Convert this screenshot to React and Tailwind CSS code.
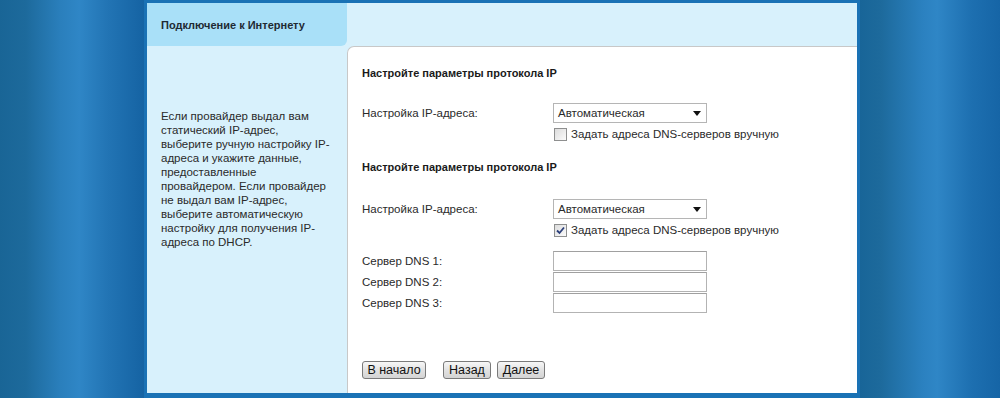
import React from "react";

const helpLines = [
  "Если провайдер выдал вам",
  "статический IP-адрес,",
  "выберите ручную настройку IP-",
  "адреса и укажите данные,",
  "предоставленные",
  "провайдером. Если провайдер",
  "не выдал вам IP-адрес,",
  "выберите автоматическую",
  "настройку для получения IP-",
  "адреса по DHCP.",
];

const Select = ({ value }) => (
  <div className="w-[154px] h-[20px] border border-[#b5b5b5] bg-white flex items-center justify-between pl-[4px] pr-[5px]">
    <span>{value}</span>
    <svg width="8" height="5" viewBox="0 0 8 5">
      <path d="M0 0H8L4 5Z" fill="#111" />
    </svg>
  </div>
);

const Checkbox = ({ checked, label }) => (
  <div className="flex items-center h-[14px] pl-[1px]">
    <span className="w-[13px] h-[13px] border border-[#8e8f8f] bg-[linear-gradient(135deg,#dcdcdc,#fbfbfb)] flex items-center justify-center">
      {checked && (
        <svg width="9" height="9" viewBox="0 0 9 9">
          <path d="M1 4.5L3.5 7L8 1.5" stroke="#2b3f7a" strokeWidth="1.8" fill="none" />
        </svg>
      )}
    </span>
    <span className="ml-[4px]">{label}</span>
  </div>
);

const Row = ({ label, children, className = "" }) => (
  <div className={`flex items-center ${className}`}>
    <div className="w-[191px]">{label}</div>
    {children}
  </div>
);

const TextBox = () => (
  <div className="w-[154px] h-[20px] border border-[#b3b3b3] border-t-[#a0a0a0] bg-white" />
);

const Button = ({ children, className = "" }) => (
  <button
    className={`h-[18px] px-0 whitespace-nowrap text-[12.5px] leading-[16px] text-[#111] border border-[#7a7a7a] rounded-[3px] bg-[linear-gradient(#f7f7f7,#e2e2e2_50%,#d4d4d4)] ${className}`}
  >
    {children}
  </button>
);

const App = () => {
  return (
    <div className="w-[1000px] h-[398px] flex overflow-hidden font-['Liberation_Sans',Arial,sans-serif] text-[11.5px] leading-[14px] text-[#2a2a2a]">
      <div className="w-[144px] bg-[linear-gradient(to_right,#196596_0%,#1d6a9c_18%,#2a7fbc_42%,#2f86c6_55%,#2274b4_75%,#1563a3_100%)]" />

      <div className="w-[716px] h-[398px] border-t-[3px] border-x-[3px] border-b-[5px] border-[#1a72b5] bg-[#d8f1fc] flex flex-col">
        <div className="h-[43px] flex">
          <div className="w-[200px] bg-[#a9e0f8] rounded-br-[6px] flex items-center pl-[14px] font-bold text-[11px] text-[#1e2a33]">
            Подключение к Интернету
          </div>
        </div>

        <div className="flex flex-1">
          <div className="w-[200px] pl-[14px] pt-[63px]">
            {helpLines.map((line) => (
              <div key={line} className="whitespace-nowrap">
                {line}
              </div>
            ))}
          </div>

          <div className="flex-1 bg-white border-t border-l border-[#c8c8c8] rounded-tl-[7px] pl-[14px] pt-[19px]">
            <div className="font-bold text-[11px] text-[#1a1a1a]">Настройте параметры протокола IP</div>

            <Row label="Настройка IP-адреса:" className="mt-[23px]">
              <Select value="Автоматическая" />
            </Row>
            <div className="mt-[4px] pl-[191px]">
              <Checkbox label="Задать адреса DNS-серверов вручную" />
            </div>

            <div className="mt-[19px] font-bold text-[11px] text-[#1a1a1a]">Настройте параметры протокола IP</div>

            <Row label="Настройка IP-адреса:" className="mt-[25px]">
              <Select value="Автоматическая" />
            </Row>
            <div className="mt-[4px] pl-[191px]">
              <Checkbox checked label="Задать адреса DNS-серверов вручную" />
            </div>

            <Row label="Сервер DNS 1:" className="mt-[14px]">
              <TextBox />
            </Row>
            <Row label="Сервер DNS 2:" className="mt-[1px]">
              <TextBox />
            </Row>
            <Row label="Сервер DNS 3:" className="mt-[1px]">
              <TextBox />
            </Row>

            <div className="mt-[48px] flex">
              <Button className="w-[64px]">В начало</Button>
              <Button className="w-[48px] ml-[17px]">Назад</Button>
              <Button className="w-[48px] ml-[6px]">Далее</Button>
            </div>
          </div>
        </div>
      </div>

      <div className="flex-1 bg-[linear-gradient(to_right,#186598_0%,#1d6a9c_15%,#2b81c0_45%,#2f86c6_55%,#1d6fb0_80%,#1665a6_100%)]" />
    </div>
  );
};

export default App;
